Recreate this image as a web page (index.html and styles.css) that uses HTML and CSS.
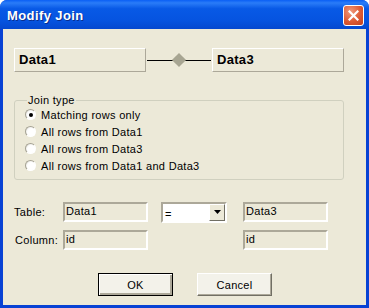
FILE: index.html
```html
<!DOCTYPE html>
<html lang="en">
<head>
  <meta charset="UTF-8">
  <title>Modify Join</title>
  <link rel="stylesheet" href="styles.css">
</head>
<body>
  <div class="window">
    <div class="titlebar">
      <span class="title">Modify Join</span>
      <span class="close">
        <svg width="11" height="11" viewBox="0 0 11 11">
          <path d="M1.5 1.5 L9.5 9.5 M9.5 1.5 L1.5 9.5" stroke="#fff" stroke-width="2.2" stroke-linecap="square"/>
        </svg>
      </span>
    </div>
    <div class="client">
      <!-- Tables being joined -->
      <div class="join-head">
        <div class="table-box">Data1</div>
        <div class="connector">
          <span class="line"></span>
          <span class="diamond"></span>
          <span class="line"></span>
        </div>
        <div class="table-box">Data3</div>
      </div>

      <!-- Join type -->
      <fieldset class="group">
        <legend>Join type</legend>
        <label class="radio"><span class="dot checked"></span>Matching rows only</label>
        <label class="radio"><span class="dot"></span>All rows from Data1</label>
        <label class="radio"><span class="dot"></span>All rows from Data3</label>
        <label class="radio"><span class="dot"></span>All rows from Data1 and Data3</label>
      </fieldset>

      <!-- Join fields -->
      <div class="fields">
        <span class="label">Table:</span>
        <div class="field">Data1</div>
        <div class="combo"><span class="value">=</span><span class="drop">
          <svg width="7" height="4" viewBox="0 0 7 4"><path d="M0 0 H7 L3.5 4 Z" fill="#000"/></svg>
        </span></div>
        <div class="field">Data3</div>
        <span class="label col">Column:</span>
        <div class="field">id</div>
        <span></span>
        <div class="field">id</div>
      </div>

      <div class="buttons">
        <button class="btn default">OK</button>
        <button class="btn">Cancel</button>
      </div>
    </div>
  </div>
</body>
</html>
```

FILE: styles.css
```css
body {
  margin: 0;
  background: #fff;
  font-family: "Liberation Sans", Arial, sans-serif;
  font-size: 11px;
  letter-spacing: 0.3px;
  color: #000;
}

/* Window frame */
.window {
  width: 369px;
  height: 308px;
  box-sizing: border-box;
  background: #0842d4;
  border-radius: 7px 7px 0 0;
  display: flex;
  flex-direction: column;
  overflow: hidden;
}

.titlebar {
  height: 29px;
  flex: none;
  display: flex;
  align-items: center;
  justify-content: space-between;
  padding: 0 5px 0 7px;
  background: linear-gradient(#0a5ff5 0%, #2a7cf8 10%, #0859e6 30%, #0654e0 70%, #0548cf 100%);
}

.title {
  color: #fff;
  font-family: "Liberation Sans", Arial, sans-serif;
  font-weight: bold;
  font-size: 13px;
  letter-spacing: 0.4px;
  text-shadow: 1px 1px 0 #0a2d8c;
  margin-top: 1px;
}

.close {
  width: 21px;
  height: 21px;
  box-sizing: border-box;
  border: 1px solid #fff;
  border-radius: 3px;
  background: radial-gradient(circle at 35% 30%, #f09a7c, #dd5a34 55%, #c2401e);
  display: flex;
  align-items: center;
  justify-content: center;
  margin-top: 1px;
}

.client {
  flex: 1;
  margin: 0 3px 3px 3px;
  background: #ece9d8;
  padding: 19px 0 0 11px;
}

/* Join header */
.join-head {
  display: flex;
  align-items: center;
}

.table-box {
  width: 132px;
  height: 24px;
  box-sizing: border-box;
  border: 1px solid;
  border-color: #fff #aca899 #aca899 #fff;
  font-weight: bold;
  font-size: 13px;
  line-height: 22px;
  padding-left: 4px;
}

.connector {
  width: 66px;
  display: flex;
  align-items: center;
  padding: 0 1px;
  box-sizing: border-box;
}

.connector .line {
  flex: 1;
  height: 1px;
  background: #000;
}

.diamond {
  width: 10px;
  height: 10px;
  background: #a7a592;
  transform: rotate(45deg);
  margin: 0 1px;
}

/* Join type group */
.group {
  width: 330px;
  height: 86px;
  box-sizing: border-box;
  margin: 22px 0 0 0;
  padding: 0 0 0 10px;
  border: 1px solid #d0d0bf;
  border-radius: 3px;
}

.group legend {
  padding: 0 1px;
  margin-left: 2px;
}

.radio {
  display: flex;
  align-items: center;
  height: 17px;
  gap: 5px;
}

.dot {
  width: 11px;
  height: 11px;
  box-sizing: border-box;
  border-radius: 50%;
  border: 1px solid;
  border-color: #a6a395 #fff #fff #a6a395;
  background: radial-gradient(circle at 60% 60%, #fff 50%, #dcdad0);
  position: relative;
}

.dot.checked::after {
  content: "";
  position: absolute;
  left: 3px;
  top: 3px;
  width: 4px;
  height: 4px;
  border-radius: 50%;
  background: #000;
}

/* Fields grid */
.fields {
  display: grid;
  grid-template-columns: 49px 85px 95px 85px;
  grid-template-rows: 20px 20px;
  row-gap: 8px;
  margin-top: 22px;
  align-items: center;
}

.label.col {
  padding-left: 1px;
}

.field {
  height: 20px;
  box-sizing: border-box;
  border: 2px solid;
  border-color: #aca899 #fff #fff #aca899;
  padding: 1px 0 0 1px;
}

.combo {
  margin-left: 13px;
  width: 66px;
  height: 21px;
  box-sizing: border-box;
  border: 2px solid;
  border-color: #aca899 #fff #fff #aca899;
  background: #fff;
  display: flex;
  justify-content: space-between;
}

.combo .value {
  padding: 4px 0 0 2px;
}

.drop {
  width: 16px;
  box-sizing: border-box;
  border: 1px solid;
  border-color: #fff #716f64 #716f64 #fff;
  background: #ece9d8;
  display: flex;
  align-items: center;
  justify-content: center;
}

/* Buttons */
.buttons {
  display: flex;
  gap: 24px;
  margin: 23px 0 0 84px;
}

.btn {
  width: 75px;
  height: 23px;
  box-sizing: border-box;
  font-family: "Liberation Sans", Arial, sans-serif;
  font-size: 11px;
  letter-spacing: 0.3px;
  background: #f3f2ea;
  border: 1px solid;
  border-color: #fff #716f64 #716f64 #fff;
  box-shadow: inset -1px -1px 0 #aca899;
  padding: 0;
}

.btn.default {
  border-color: #000;
  box-shadow: inset 1px 1px 0 #fff, inset -2px -2px 0 #aca899;
}
```
